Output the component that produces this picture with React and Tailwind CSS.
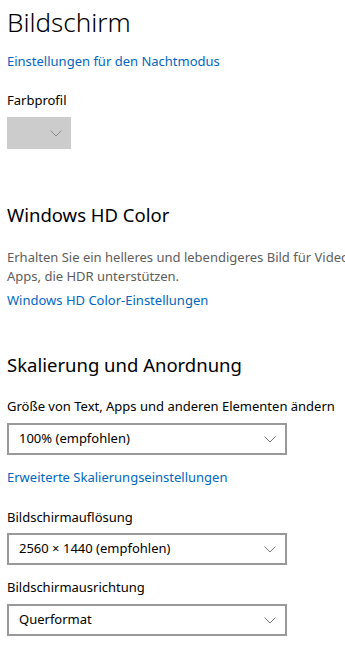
import React from 'react';

const font = { fontFamily: '"Noto Sans", "Open Sans", sans-serif' };

const Chevron = ({ className = '' }) => (
    <svg width="12" height="7" viewBox="0 0 12 7" className={className}>
        <path d="M0.5 0.5 L6 6 L11.5 0.5" fill="none" stroke="currentColor" strokeWidth="1" />
    </svg>
);

const Select = ({ value }) => (
    <div className="w-[280px] h-[32px] border-2 border-[#999999] bg-white flex items-center justify-between pl-[10px] pr-[9px]">
        <span className="text-[13px] text-black">{value}</span>
        <Chevron className="text-[#7a7a7a]" />
    </div>
);

const Link = ({ children, className = '' }) => (
    <div className={`text-[13px] leading-[20px] text-[#0067c0] ${className}`}>{children}</div>
);

const Label = ({ children, className = '' }) => (
    <div className={`text-[13px] leading-[20px] text-black ${className}`}>{children}</div>
);

const App = () => {
    return (
        <div className="w-[345px] h-[664px] bg-white overflow-hidden pl-[7px] whitespace-nowrap" style={font}>
            <h1 className="pt-[4px] text-[26px] leading-[36px] font-light text-black">Bildschirm</h1>

            <Link className="mt-[11px]">Einstellungen für den Nachtmodus</Link>

            <Label className="mt-[19px]">Farbprofil</Label>
            <div className="mt-[7px] w-[64px] h-[32px] bg-[#cccccc] flex items-center justify-end pr-[9px]">
                <Chevron className="text-[#8a8a8a]" />
            </div>

            <h2 className="mt-[52px] text-[18.5px] leading-[28px] text-black">Windows HD Color</h2>

            <div className="mt-[19px] text-[13px] leading-[19px] text-[#5d5d5d]">
                <div>Erhalten Sie ein helleres und lebendigeres Bild für Videos, Spiele und</div>
                <div>Apps, die HDR unterstützen.</div>
            </div>
            <Link className="mt-[4px]">Windows HD Color-Einstellungen</Link>

            <h2 className="mt-[41px] text-[18.5px] leading-[28px] text-black">Skalierung und Anordnung</h2>

            <Label className="mt-[17px]">Größe von Text, Apps und anderen Elementen ändern</Label>
            <div className="mt-[7px]">
                <Select value="100% (empfohlen)" />
            </div>
            <Link className="mt-[12px]">Erweiterte Skalierungseinstellungen</Link>

            <Label className="mt-[20px]">Bildschirmauflösung</Label>
            <div className="mt-[6px]">
                <Select value="2560 × 1440 (empfohlen)" />
            </div>

            <Label className="mt-[12px]">Bildschirmausrichtung</Label>
            <div className="mt-[7px]">
                <Select value="Querformat" />
            </div>
        </div>
    );
};

export default App;
